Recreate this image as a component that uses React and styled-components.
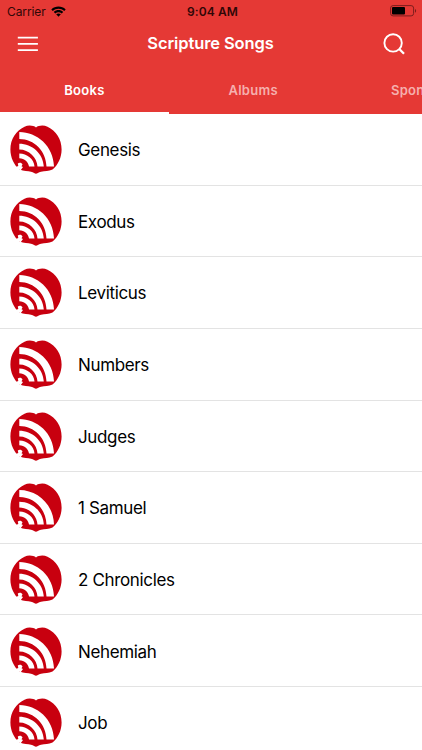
import React from "react";
import styled, { createGlobalStyle } from "styled-components";

const BOOKS = [
  "Genesis",
  "Exodus",
  "Leviticus",
  "Numbers",
  "Judges",
  "1 Samuel",
  "2 Chronicles",
  "Nehemiah",
  "Job",
];

const TABS = ["Books", "Albums", "Sponsors"];

const FeedLogo = () => (
  <svg width="52" height="52" viewBox="0 0 52 52" aria-hidden="true">
    <path
      fill="#c8000f"
      d="M26 3.500C23.500 1.500 18.500 .8 14.500 2.800C6 6.800 .4 15 .4 25.500C.4 33.500 4 41 9.500 45.600C14 47.400 18 47 21 47.800C23.500 48.300 25 49.800 26 49.800C27 49.800 28.500 48.300 31 47.800C35 47 38.500 47.400 42.500 45.600C48 41 51.600 33.500 51.600 25.500C51.600 15 46 6.800 37.500 2.800C33.500 .8 28.500 1.500 26 3.500Z"
    />
    <g fill="#fff">
      <path d="M9.300 8C27 8 43.500 22 44 42.600H36.500C36 27 24.500 14.900 9.300 14.900Z" />
      <path d="M9.300 19.700C22 19.700 33.300 29.500 33.800 42.600H27.500C27 33.500 19 25.500 9.300 25.500Z" />
      <path d="M9.300 29.500C17 29.500 24 35 24.500 42.600H19C18.500 38 14.500 34.200 9.300 34.200Z" />
      <path d="M7.800 39.400C9.300 38.300 11.800 38.500 12.500 40.500L11.500 42.300L13 43L10.700 46.300L4.500 43.500L8.300 42Z" />
    </g>
  </svg>
);

const WifiIcon = () => (
  <svg width="15" height="11" viewBox="0 0 15 11" aria-hidden="true">
    <path d="M.3 3.400C4.300-.4 10.700-.4 14.700 3.400L13.200 5C10 2 5 2 1.800 5Z" />
    <path d="M2.800 5.900C5.500 3.400 9.500 3.400 12.200 5.900L10.700 7.400C8.900 5.700 6.100 5.700 4.300 7.400Z" />
    <path d="M5.200 8.300C6.500 7.100 8.500 7.100 9.800 8.300L7.500 10.700Z" />
  </svg>
);

const BatteryIcon = () => (
  <svg width="27" height="12" viewBox="0 0 27 12" aria-hidden="true">
    <rect x=".6" y=".6" width="23" height="10.300" rx="2.500" fill="none" stroke="#7c1d1c" />
    <rect x="2" y="2" width="13" height="7.500" rx="1" fill="#000" />
    <path d="M25 4C26.500 4.500 26.500 7.200 25 7.700Z" fill="#7c1d1c" />
  </svg>
);

const MenuIcon = () => (
  <svg width="21" height="16" viewBox="0 0 21 16" fill="none" stroke="#fff" strokeWidth="1.800">
    <path d="M.8 1.700H20.900M.8 7.900H20.900M.8 14.100H20.900" />
  </svg>
);

const SearchIcon = () => (
  <svg width="22" height="22" viewBox="0 0 22 22" fill="none" stroke="#fff" strokeWidth="1.900">
    <circle cx="10.100" cy="9.900" r="8.700" />
    <path d="M16 15.800L21 20.800" strokeWidth="2.300" />
  </svg>
);

const App = () => (
  <Screen>
    <GlobalStyle />
    <Header>
      <StatusBar>
        <Carrier>
          <span>Carrier</span>
          <WifiIcon />
        </Carrier>
        <Clock>9:04 AM</Clock>
        <Battery>
          <BatteryIcon />
        </Battery>
      </StatusBar>
      <NavBar>
        <IconButton aria-label="Menu">
          <MenuIcon />
        </IconButton>
        <Title>Scripture Songs</Title>
        <IconButton aria-label="Search">
          <SearchIcon />
        </IconButton>
      </NavBar>
      <TabBar>
        {TABS.map((tab, i) => (
          <Tab key={tab} $active={i === 0}>
            <span>{tab}</span>
          </Tab>
        ))}
      </TabBar>
    </Header>
    <BookList>
      {BOOKS.map((book) => (
        <BookRow key={book}>
          <FeedLogo />
          <BookName>{book}</BookName>
        </BookRow>
      ))}
    </BookList>
  </Screen>
);

const GlobalStyle = createGlobalStyle`
  * {
    box-sizing: border-box;
  }

  body {
    margin: 0;
    overflow: hidden;
    background: #fff;
    font-family: Inter, "Liberation Sans", sans-serif;
  }

  svg {
    display: block;
    flex-shrink: 0;
  }
`;

const Screen = styled.div`
  width: 422px;
  height: 750px;
  overflow: hidden;
`;

const Header = styled.header`
  height: 114px;
  background: #e53935;
`;

const StatusBar = styled.div`
  display: grid;
  grid-template-columns: 1fr auto 1fr;
  align-items: center;
  height: 22px;
  padding: 0 5px 0 7px;
  color: #300707;
  font-size: 12px;
`;

const Carrier = styled.div`
  display: flex;
  align-items: center;
  gap: 5px;
  letter-spacing: -0.1px;
`;

const Clock = styled.span`
  padding-left: 1px;
  font-weight: 600;
  letter-spacing: 0.1px;
`;

const Battery = styled.div`
  display: flex;
  justify-content: flex-end;
`;

const NavBar = styled.div`
  display: flex;
  align-items: center;
  justify-content: space-between;
  height: 44px;
  padding: 0 17px;
`;

const IconButton = styled.button`
  display: flex;
  padding: 0;
  border: 0;
  background: none;
`;

const Title = styled.h1`
  margin: 0;
  padding-bottom: 2px;
  color: #fff;
  font-size: 16.5px;
  font-weight: 600;
  letter-spacing: -0.1px;
  line-height: 20px;
`;

const TabBar = styled.nav`
  display: flex;
  height: 48px;
  overflow: hidden;
`;

const Tab = styled.div`
  display: flex;
  flex: 0 0 168.800px;
  align-items: center;
  justify-content: center;
  padding-top: 2px;
  border-bottom: 2px solid ${({ $active }) => ($active ? "#fff" : "transparent")};
  color: ${({ $active }) => ($active ? "#fff" : "#f5b0ae")};
  font-size: 13px;
  font-weight: 600;
  letter-spacing: 0.3px;
`;

const BookList = styled.ul`
  margin: 0;
  padding: 0;
  list-style: none;
`;

const BookRow = styled.li`
  display: flex;
  align-items: center;
  gap: 16px;
  height: 71.650px;
  padding: 1.500px 0 0 10px;
  border-bottom: 1px solid #e3e3e3;
`;

const BookName = styled.span`
  color: #000;
  font-size: 17px;
  letter-spacing: -0.350px;
  line-height: 22px;
`;

export default App;
